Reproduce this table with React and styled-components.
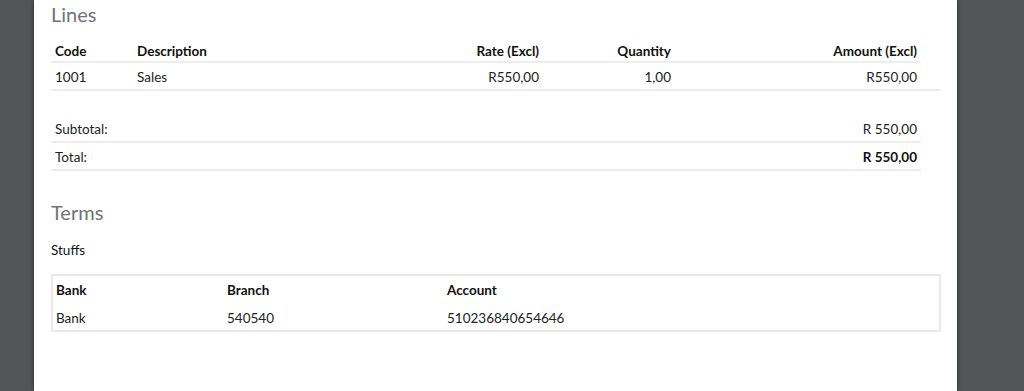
import React from "react"
import styled, { createGlobalStyle } from "styled-components"

const GlobalStyle = createGlobalStyle`
	html, body {
		margin: 0;
		padding: 0;
		height: 100%;
		background: #525659;
		overflow: hidden;
	}
	body {
		font-family: Lato, "Liberation Sans", sans-serif;
		font-size: 13.5px;
		color: #222;
	}
`

const lines = [
	{ code: "1001", description: "Sales", rate: "R550,00", quantity: "1,00", amount: "R550,00" },
]

const App = () => {
	return (
		<Viewer>
			<GlobalStyle />
			<Page>
				<Heading>Lines</Heading>
				<LineTable>
					<HeadCell>Code</HeadCell>
					<HeadCell>Description</HeadCell>
					<HeadCell right>Rate (Excl)</HeadCell>
					<HeadCell right>Quantity</HeadCell>
					<HeadCell right>Amount (Excl)</HeadCell>
					<Spacer />
					{lines.map(line => (
						<React.Fragment key={line.code}>
							<Cell>{line.code}</Cell>
							<Cell>{line.description}</Cell>
							<Cell right>{line.rate}</Cell>
							<Cell right>{line.quantity}</Cell>
							<Cell right>{line.amount}</Cell>
							<Cell />
						</React.Fragment>
					))}
				</LineTable>

				<Totals>
					<TotalRow>
						<span>Subtotal:</span>
						<span>R 550,00</span>
					</TotalRow>
					<TotalRow>
						<span>Total:</span>
						<strong>R 550,00</strong>
					</TotalRow>
				</Totals>

				<Heading spaced>Terms</Heading>
				<Terms>Stuffs</Terms>

				<BankBox>
					<BankHead>Bank</BankHead>
					<BankHead>Branch</BankHead>
					<BankHead>Account</BankHead>
					<BankValue>Bank</BankValue>
					<BankValue>540540</BankValue>
					<BankValue>510236840654646</BankValue>
				</BankBox>
			</Page>
		</Viewer>
	)
}

const Viewer = styled.div`
	height: 391px;
	display: flex;
	padding-left: 34px;
`

const Page = styled.div`
	width: 923px;
	box-sizing: border-box;
	background: #fff;
	padding: 2px 16px 0 17px;
	box-shadow: 0 0 4px rgba(0, 0, 0, 0.55);
`

const Heading = styled.h2`
	margin: ${props => (props.spaced ? "29px" : "0")} 0 0;
	font-size: 20px;
	line-height: 24px;
	font-weight: 400;
	color: #6f7377;
`

const LineTable = styled.div`
	display: grid;
	grid-template-columns: 82px 250px 160px 132px 246px 20px;
	margin-top: 9px;
`

const HeadCell = styled.div`
	padding: 9px 4px 2px;
	line-height: 15px;
	font-weight: 700;
	color: #111;
	text-align: ${props => (props.right ? "right" : "left")};
	border-bottom: 2px solid #eeeeee;
`

const Spacer = styled.div``

const Cell = styled.div`
	padding: 7px 4px 4px;
	line-height: 15px;
	text-align: ${props => (props.right ? "right" : "left")};
	border-bottom: 2px solid #eeeeee;
`

const Totals = styled.div`
	width: 870px;
	margin-top: 24px;
`

const TotalRow = styled.div`
	display: flex;
	justify-content: space-between;
	padding: 7px 4px 4px;
	line-height: 15px;
	border-bottom: 2px solid #eeeeee;

	strong {
		color: #111;
	}
`

const Terms = styled.p`
	margin: 19px 0 0;
	line-height: 15px;
	color: #111;
`

const BankBox = styled.div`
	display: grid;
	grid-template-columns: 171px 220px 1fr;
	width: 890px;
	box-sizing: border-box;
	margin-top: 16px;
	border: 2px solid #e9e9e9;
`

const BankHead = styled.div`
	padding: 7px 3px 7px;
	line-height: 15px;
	font-weight: 700;
	color: #111;
`

const BankValue = styled.div`
	padding: 6px 3px 4px;
	line-height: 15px;
`

export default App
